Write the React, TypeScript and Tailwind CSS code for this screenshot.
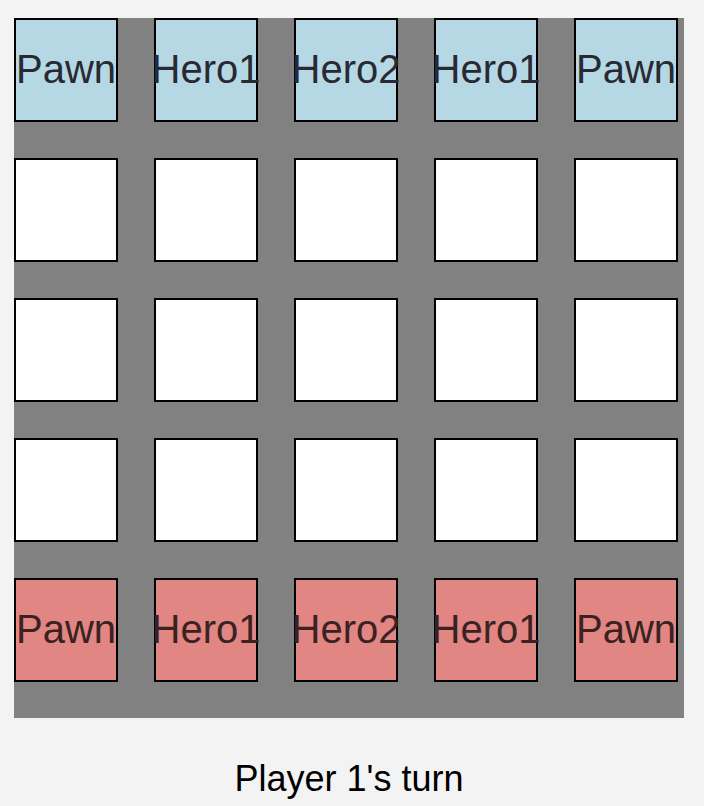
const ranks = ["Pawn", "Hero1", "Hero2", "Hero1", "Pawn"];
const blank = ["", "", "", "", ""];
const rows = [
  { pieces: ranks, tone: "bg-[#b6d8e4] text-[#292933]" },
  { pieces: blank, tone: "bg-white" },
  { pieces: blank, tone: "bg-white" },
  { pieces: blank, tone: "bg-white" },
  { pieces: ranks, tone: "bg-[#e18683] text-[#3a2222]" },
];

export default function App() {
  return (
    <main className="min-h-screen bg-[#f3f3f3] pt-[18px] pr-5 pl-[14px] font-['Liberation_Sans',Arial,sans-serif] text-black">
      <div className="grid grid-cols-[repeat(5,104px)] gap-9 bg-[#818181] pb-9">
        {rows.map((row, y) =>
          row.pieces.map((piece, x) => (
            <button
              key={`${y}-${x}`}
              type="button"
              aria-label={piece || `Empty square, row ${y + 1}, column ${x + 1}`}
              className={`flex size-[104px] items-center justify-center border-2 border-black pb-0.5 text-[40px] leading-none ${row.tone}`}
            >
              {piece}
            </button>
          ))
        )}
      </div>
      <p className="pt-10 text-center text-[36px] leading-[42px]">Player 1's turn</p>
    </main>
  );
}
